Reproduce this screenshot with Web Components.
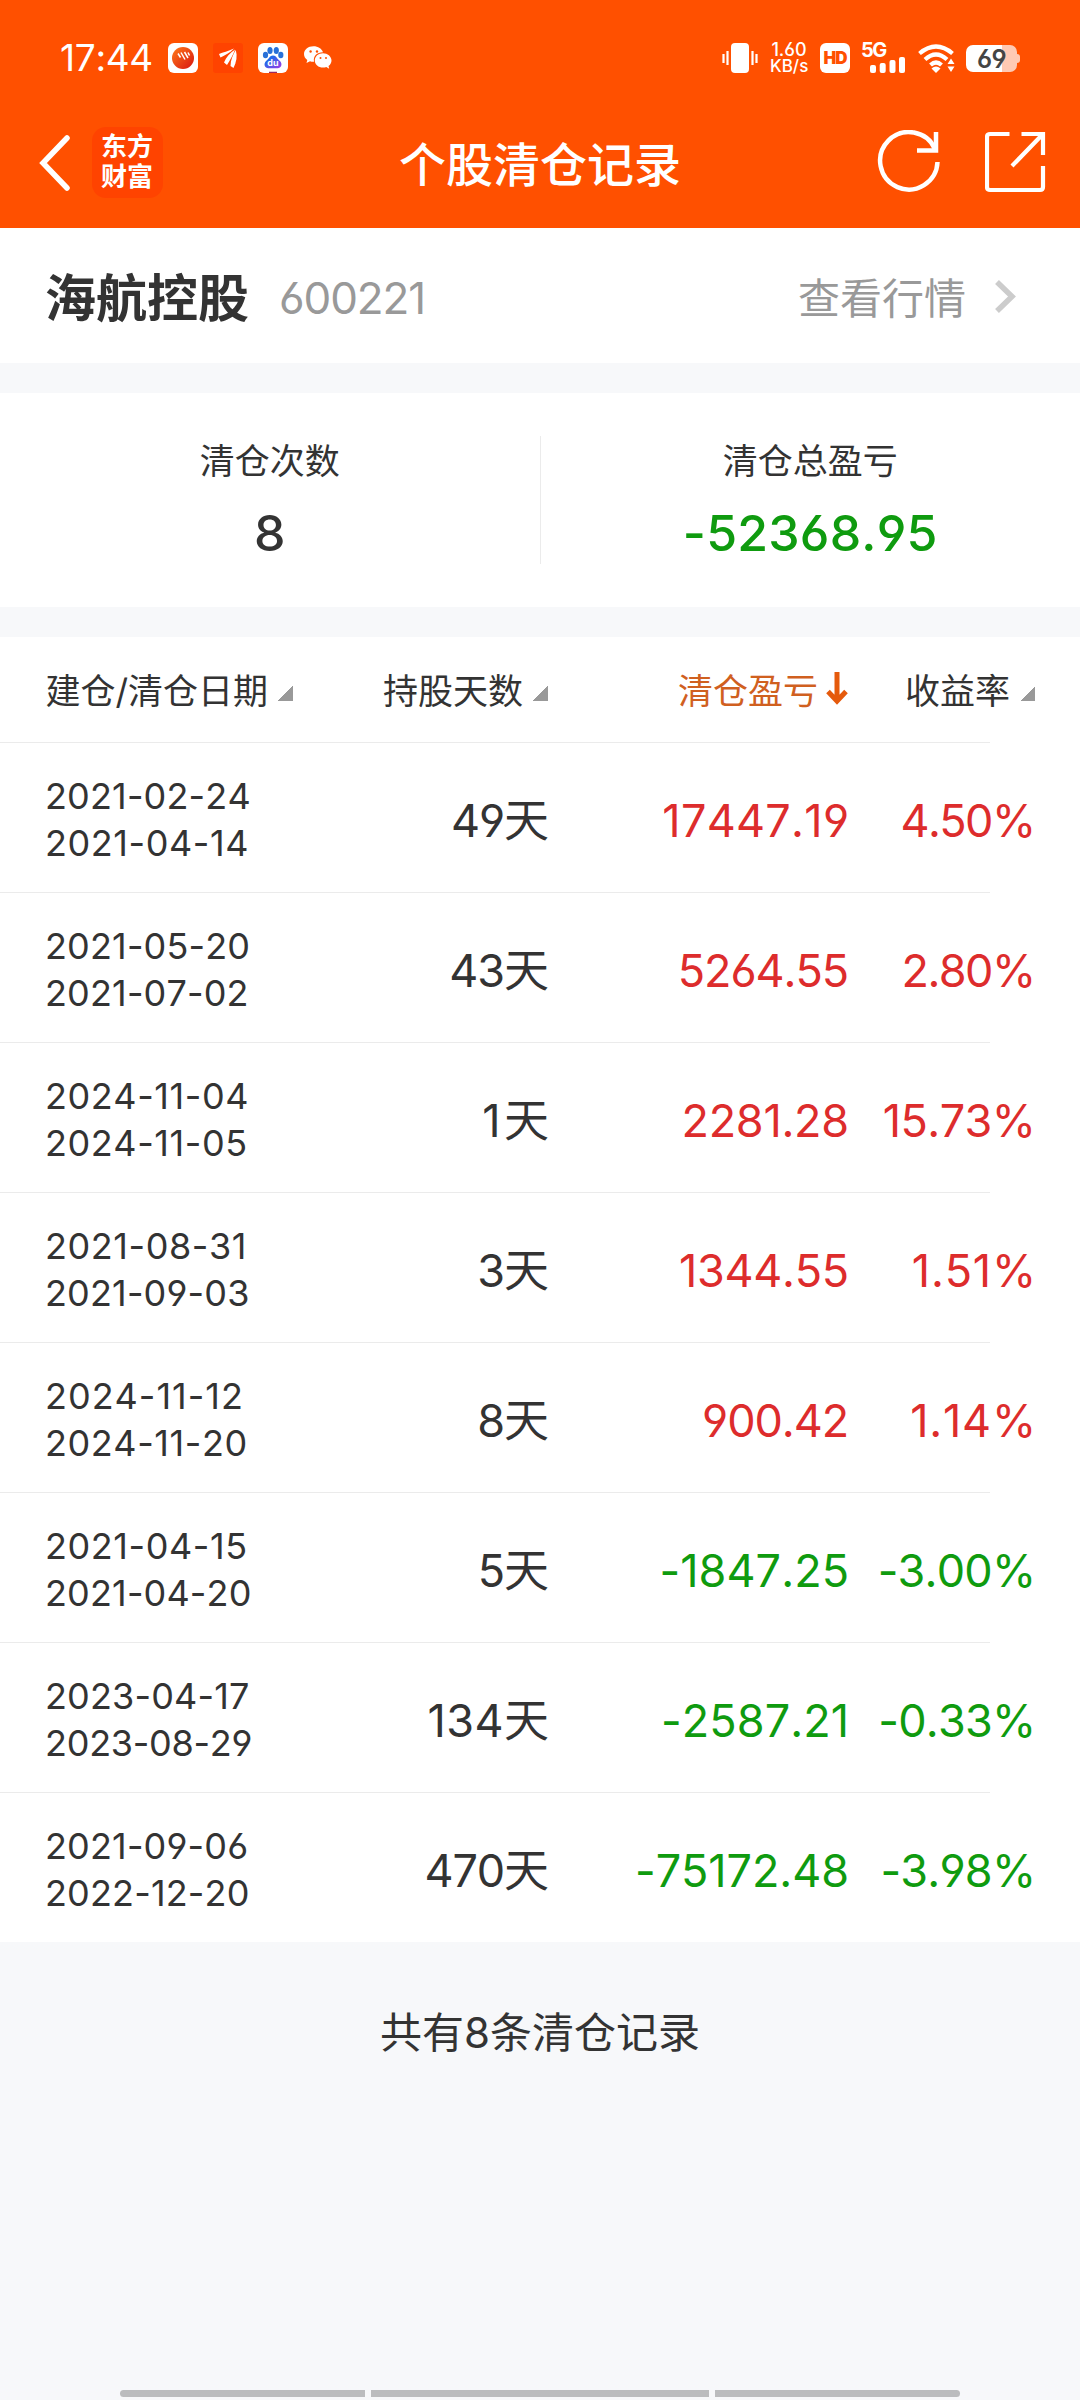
<!DOCTYPE html>
<html lang="zh-CN">
<head>
<meta charset="UTF-8">
<title>个股清仓记录</title>
<style>
body {
    margin: 0;
    background: #f7f8fa;
    color: #333;
    font-family: Inter, "Noto Sans CJK SC", sans-serif;
    font-feature-settings: "cv03", "cv04";
    font-kerning: none;
}
</style>
</head>
<body>
<clear-page>
    <status-bar></status-bar>
    <title-bar>个股清仓记录</title-bar>
    <stock-bar code="600221">海航控股</stock-bar>
    <summary-card>
        <summary-item label="清仓次数">8</summary-item>
        <summary-item label="清仓总盈亏" class="down">-52368.95</summary-item>
    </summary-card>
    <record-table></record-table>
    <span slot="footer">共有8条清仓记录</span>
</clear-page>

<script>
class BaseElement extends HTMLElement {
    constructor() {
        super();
        this.attachShadow({ mode: "open" });
    }

    connectedCallback() {
        this.shadowRoot.innerHTML = this.render();
    }
}

class ClearPage extends BaseElement {
    render() {
        return `
        <style>
        :host {
            display: flex;
            flex-direction: column;
            width: 1080px;
            height: 2400px;
            overflow: hidden;
        }
        .footer {
            flex: 1;
            padding-top: 61px;
            line-height: 60px;
            font-size: 42px;
            text-align: center;
        }
        .nav {
            display: flex;
            gap: 6px;
            padding: 0 120px 3px;
        }
        .nav i {
            height: 7px;
            width: 245px;
            background: #bbbcbe;
        }
        .nav i:nth-child(1) { border-radius: 4px 0 0 4px; }
        .nav i:nth-child(2) { width: 338px; }
        .nav i:nth-child(3) { border-radius: 0 4px 4px 0; }
        </style>
        <slot></slot>
        <div class="footer"><slot name="footer"></slot></div>
        <div class="nav"><i></i><i></i><i></i></div>
        `;
    }
}

class StatusBar extends BaseElement {
    render() {
        return `
        <style>
        :host {
            display: flex;
            align-items: center;
            box-sizing: border-box;
            height: 100px;
            padding: 16px 60px 0 60px;
            background: #ff5000;
            color: #fff;
        }
        svg { display: block; flex: none; }
        .time {
            width: 108px;
            font-size: 37px;
            letter-spacing: -0.3px;
            line-height: 40px;
            white-space: nowrap;
        }
        .apps { display: flex; gap: 15px; flex: 1; }
        .speed {
            width: 38px;
            margin-left: 12px;
            font-size: 17px;
            font-weight: 500;
            line-height: 16px;
            text-align: center;
            white-space: nowrap;
        }
        .speed b { display: block; font-weight: 500; font-size: 18px; }
        .hd {
            width: 30px;
            height: 30px;
            margin-left: 12px;
            border-radius: 6px;
            background: #fff;
            color: #ff5000;
            font-size: 17px;
            font-weight: 900;
            letter-spacing: -1px;
            line-height: 30px;
            text-align: center;
        }
        .cell { width: 46px; height: 30px; margin-left: 11px; }
        .cell b { display: block; height: 14px; font-size: 20px; line-height: 15px; font-weight: 700; letter-spacing: -1.500px; }
        .cell svg { margin-left: 9px; }
        .battery {
            display: flex;
            align-items: center;
            margin-left: 11px;
        }
        .battery span {
            width: 51px;
            height: 27px;
            border-radius: 7px;
            background: linear-gradient(90deg, #fff 36px, #ffc9b3 36px);
            color: #444;
            font-size: 25px;
            font-weight: 600;
            letter-spacing: -0.5px;
            line-height: 28px;
            text-align: center;
        }
        .battery::after {
            content: "";
            width: 3px;
            height: 9px;
            border-radius: 0 3px 3px 0;
            background: #ffc9b3;
        }
        </style>
        <div class="time">17:44</div>
        <div class="apps">
            <svg width="30" height="30" viewBox="0 0 30 30">
                <defs>
                    <linearGradient id="ball" x1="0" y1="0" x2="1" y2="1">
                        <stop offset="0" stop-color="#ff7a1a"/><stop offset="1" stop-color="#d81410"/>
                    </linearGradient>
                </defs>
                <rect width="30" height="30" rx="6" fill="#fff"/>
                <circle cx="15" cy="15" r="11" fill="url(#ball)"/>
                <path d="M10 10.500l2.500 4M13 9.500l4 7M16.500 9l3.500 6M20 9.500l1.500 3" stroke="#fff" stroke-width="1.500" fill="none"/>
            </svg>
            <svg width="30" height="30" viewBox="0 0 30 30">
                <rect width="30" height="30" rx="3" fill="#ff4300"/>
                <path d="M6 11C10 9.500 15 8 21 5.500C17 10 12 12 7.500 14.500Z" fill="#fff"/>
                <path d="M11 19.500C13 14 17 10 22 6.500C20.500 11.500 17 17 14 22Z" fill="#fff"/>
                <path d="M17.500 23C17.500 17 20 11.500 22.800 7C24.500 13 23.500 19 20.500 25Z" fill="#fff"/>
            </svg>
            <svg width="30" height="30" viewBox="0 0 30 30">
                <defs>
                    <linearGradient id="paw" x1="0" y1="0" x2="1" y2="1">
                        <stop offset=".3" stop-color="#2468e8"/><stop offset="1" stop-color="#a23be8"/>
                    </linearGradient>
                </defs>
                <rect width="30" height="30" rx="6" fill="#fff"/>
                <ellipse cx="7.500" cy="12" rx="2.600" ry="3.300" fill="#2870d8"/>
                <ellipse cx="12" cy="7.500" rx="2.600" ry="3.500" fill="#2870d8"/>
                <ellipse cx="18.300" cy="7.500" rx="2.600" ry="3.500" fill="#2870d8"/>
                <ellipse cx="22.800" cy="12" rx="2.600" ry="3.300" fill="#2870d8"/>
                <path d="M15 12.500C18.500 12.500 19 16 22 18C25 21 23 25.500 19.500 25.300H10.500C7 25.500 5 21 8 18C11 16 11.500 12.500 15 12.500Z" fill="url(#paw)"/>
                <text x="15" y="23" font-size="9" font-weight="700" text-anchor="middle" fill="#fff">du</text>
                <path d="M11 29.500h8" stroke="#9b2a60" stroke-width="1.500"/>
            </svg>
            <svg width="30" height="30" viewBox="0 0 30 30">
                <path d="M10.500 3.200C5 3.200 1 6.700 1 11C1 13.500 2.300 15.600 4.300 17L3.500 20L7 18.200C8.200 18.600 9.500 18.800 11 18.700C10 13 14 9.300 20 9.300C19 5.700 15 3.200 10.500 3.200Z" fill="#fff"/>
                <path d="M20 10.300C15.200 10.300 11.800 13.500 11.800 17.500C11.800 21.500 15.500 24.600 20 24.600C21.200 24.600 22.300 24.400 23.300 24L26.200 25.800L25.500 23C27.400 21.700 28.500 19.700 28.500 17.500C28.500 13.500 24.500 10.300 20 10.300Z" fill="#fff"/>
                <g fill="#ff5000"><circle cx="7.600" cy="8.500" r="1.200"/><circle cx="14" cy="8.500" r="1.200"/><circle cx="17.500" cy="15" r="1"/><circle cx="23" cy="15" r="1"/></g>
            </svg>
        </div>
        <svg width="36" height="30" viewBox="0 0 36 30">
            <rect x="9" width="18" height="30" rx="4" fill="#fff"/>
            <path d="M1.500 11v9M5.500 8v14M30.500 8v14M34.500 11v9" stroke="#fff" stroke-width="2.200"/>
        </svg>
        <div class="speed"><b>1.60</b>KB/s</div>
        <div class="hd">HD</div>
        <div class="cell">
            <b>5G</b>
            <svg width="36" height="16" viewBox="0 0 36 16" fill="#fff">
                <rect y="8" width="6" height="8" rx="2"/>
                <rect x="9.700" y="6" width="6" height="10" rx="2"/>
                <rect x="19.500" y="3" width="6" height="13" rx="2"/>
                <rect x="29" y="0" width="6" height="16" rx="2"/>
            </svg>
        </div>
        <svg width="37" height="30" viewBox="0 0 37 30" style="margin-left:11px" fill="none" stroke="#fff" stroke-width="4.200">
            <path d="M1.500 10.500Q18 -3.500 34.500 10.500"/>
            <path d="M7 16.500Q18 6.500 29 16.500"/>
            <path d="M12.500 22Q18 17 23.500 22"/>
            <path d="M13.500 25.500Q18 21.500 22.500 25.500L18 30Z" fill="#fff" stroke="none"/>
            <path d="M29.500 21L33 15.500L36.500 21ZM29.500 23.500L33 29L36.500 23.500Z" fill="#fff" stroke="none"/>
        </svg>
        <div class="battery"><span>69</span></div>
        `;
    }
}

class TitleBar extends BaseElement {
    render() {
        return `
        <style>
        :host {
            display: grid;
            grid-template-columns: 1fr auto 1fr;
            align-items: center;
            box-sizing: border-box;
            height: 128px;
            padding: 0 34px 4px 37px;
            background: #ff5000;
            color: #fff;
        }
        svg { display: block; }
        .left, .right { display: flex; align-items: center; }
        .right { justify-content: flex-end; gap: 44px; }
        .logo {
            box-sizing: border-box;
            width: 71px;
            height: 71px;
            margin-left: 20px;
            padding: 5px 0 0 9px;
            border-radius: 14px;
            background: #ff4300;
            font-size: 26px;
            font-weight: 700;
            line-height: 30px;
        }
        h1 {
            margin: 0;
            padding: 5px 3px 0 0;
            font-size: 47px;
            font-weight: 500;
            line-height: 60px;
        }
        </style>
        <div class="left">
            <svg width="35" height="60" viewBox="0 0 35 60"><path d="M30 6L6 31L30 56" fill="none" stroke="#fff" stroke-width="5.500" stroke-linecap="round"/></svg>
            <div class="logo">东方<br>财富</div>
        </div>
        <h1><slot></slot></h1>
        <div class="right">
            <svg width="64" height="64" viewBox="0 0 64 64" fill="none" stroke="#fff" stroke-width="4.500">
                <path d="M60.500 32A28.700 28.700 0 1 1 58 19"/>
                <path d="M59 2V20.500H40"/>
            </svg>
            <svg width="61" height="62" viewBox="0 0 61 62" fill="none" stroke="#fff" stroke-width="4.200">
                <path d="M24.500 3H5Q2 3 2 6V56Q2 59 5 59H55Q58 59 58 56V35"/>
                <path d="M36.500 3H58V24M57 4L27 35"/>
            </svg>
        </div>
        `;
    }
}

class StockBar extends BaseElement {
    render() {
        return `
        <style>
        :host {
            display: flex;
            align-items: center;
            box-sizing: border-box;
            height: 135px;
            padding: 2px 63px 0 45px;
            background: #fff;
        }
        .name { padding-bottom: 4px; font-size: 51px; font-weight: 700; }
        .code { flex: 1; padding-top: 2px; margin-left: 30px; color: #999; font-size: 44px; letter-spacing: -1.100px; }
        .link { padding-bottom: 3px; color: #999; font-size: 42px; }
        svg { margin-left: 28px; }
        </style>
        <div class="name"><slot></slot></div>
        <div class="code">${this.getAttribute("code")}</div>
        <div class="link">查看行情</div>
        <svg width="23" height="36" viewBox="0 0 23 36"><path d="M3 3L18 17.500L3 32" fill="none" stroke="#ccc" stroke-width="5.500"/></svg>
        `;
    }
}

class SummaryCard extends BaseElement {
    render() {
        return `
        <style>
        :host {
            display: flex;
            height: 214px;
            margin: 30px 0;
            align-items: center;
            background: #fff;
        }
        ::slotted(summary-item) { flex: 1; }
        ::slotted(summary-item:last-child) { border-left: 1px solid #ebebeb; }
        </style>
        <slot></slot>
        `;
    }
}

class SummaryItem extends BaseElement {
    render() {
        return `
        <style>
        :host {
            display: block;
            height: 128px;
            text-align: center;
        }
        .label { padding-top: 1px; font-size: 35px; line-height: 48px; }
        .value { margin-top: 18px; font-size: 50px; font-weight: 500; line-height: 60px; letter-spacing: 0.200px; }
        :host(.down) .value { color: #0f9b0f; }
        </style>
        <div class="label">${this.getAttribute("label")}</div>
        <div class="value"><slot></slot></div>
        `;
    }
}

const records = [
    ["2021-02-24", "2021-04-14", 49, "17447.19", "4.50%"],
    ["2021-05-20", "2021-07-02", 43, "5264.55", "2.80%"],
    ["2024-11-04", "2024-11-05", 1, "2281.28", "15.73%"],
    ["2021-08-31", "2021-09-03", 3, "1344.55", "1.51%"],
    ["2024-11-12", "2024-11-20", 8, "900.42", "1.14%"],
    ["2021-04-15", "2021-04-20", 5, "-1847.25", "-3.00%"],
    ["2023-04-17", "2023-08-29", 134, "-2587.21", "-0.33%"],
    ["2021-09-06", "2022-12-20", 470, "-75172.48", "-3.98%"],
];

// "1" and "-" are narrow in Inter, so loosen the strings that contain them
function tracking(text) {
    const count = (char) => text.split(char).length - 1;
    const extra = count("1") * 0.105 + count("-") * 0.075 - count("%") * 0.045;
    const spacing = -0.024 + extra / (text.length - 1);
    return `letter-spacing:${spacing.toFixed(4)}em;margin-right:${(-0.024 - spacing).toFixed(4)}em`;
}

class RecordTable extends BaseElement {
    cell(slot, text) {
        return `<span slot="${slot}" style="${tracking(text)}">${text}</span>`;
    }

    render() {
        const rows = records.map(([open, close, days, profit, rate]) => `
            <record-row class="${profit[0] === "-" ? "down" : "up"}">
                ${this.cell("open", open)}
                ${this.cell("close", close)}
                ${this.cell("days", days + "天")}
                ${this.cell("profit", profit)}
                ${this.cell("rate", rate)}
            </record-row>`).join("");
        return `
        <style>
        :host { display: block; height: 1305px; overflow: hidden; background: #fff; }
        .head {
            display: grid;
            grid-template-columns: 248px 255px 300px 187px;
            align-items: center;
            height: 105px;
            padding-left: 45px;
            font-size: 35px;
            line-height: 50px;
        }
        .head div { display: flex; align-items: center; justify-content: flex-end; padding-top: 2px; white-space: nowrap; }
        .tri {
            width: 15px;
            height: 15px;
            margin: 5px 0 0 10px;
            background: linear-gradient(135deg, transparent 50%, #999 50%);
        }
        .active { color: #d0601f; }
        .active svg { margin: -3px 0 0 8px; }
        </style>
        <div class="head">
            <div>建仓/清仓日期<i class="tri"></i></div>
            <div>持股天数<i class="tri"></i></div>
            <div class="active">清仓盈亏<svg width="22" height="34" viewBox="0 0 22 34" fill="none" stroke="#e55a0c" stroke-width="5"><path d="M11 0V30M2 19.500L11 29L20 19.500"/></svg></div>
            <div>收益率<i class="tri"></i></div>
        </div>
        ${rows}
        `;
    }
}

class RecordRow extends BaseElement {
    render() {
        return `
        <style>
        :host {
            display: grid;
            grid-template-columns: 248px 255px 300px 187px;
            align-items: center;
            box-sizing: border-box;
            height: 150px;
            padding-left: 45px;
            background: linear-gradient(#ebebeb, #ebebeb) 0 0 / 990px 1px no-repeat;
            font-size: 45px;
            text-align: right;
            white-space: nowrap;
        }
        .dates { padding-top: 5px; font-size: 36px; line-height: 47px; text-align: left; }
        .days { padding-top: 1px; }
        .money { padding-top: 7px; }
        :host(.up) .money { color: #dd2c2c; }
        :host(.down) .money { color: #0f9b0f; }
        </style>
        <div class="dates"><div><slot name="open"></slot></div><div><slot name="close"></slot></div></div>
        <div class="days"><slot name="days"></slot></div>
        <div class="money"><slot name="profit"></slot></div>
        <div class="money"><slot name="rate"></slot></div>
        `;
    }
}

customElements.define("clear-page", ClearPage);
customElements.define("status-bar", StatusBar);
customElements.define("title-bar", TitleBar);
customElements.define("stock-bar", StockBar);
customElements.define("summary-card", SummaryCard);
customElements.define("summary-item", SummaryItem);
customElements.define("record-row", RecordRow);
customElements.define("record-table", RecordTable);
</script>
</body>
</html>
